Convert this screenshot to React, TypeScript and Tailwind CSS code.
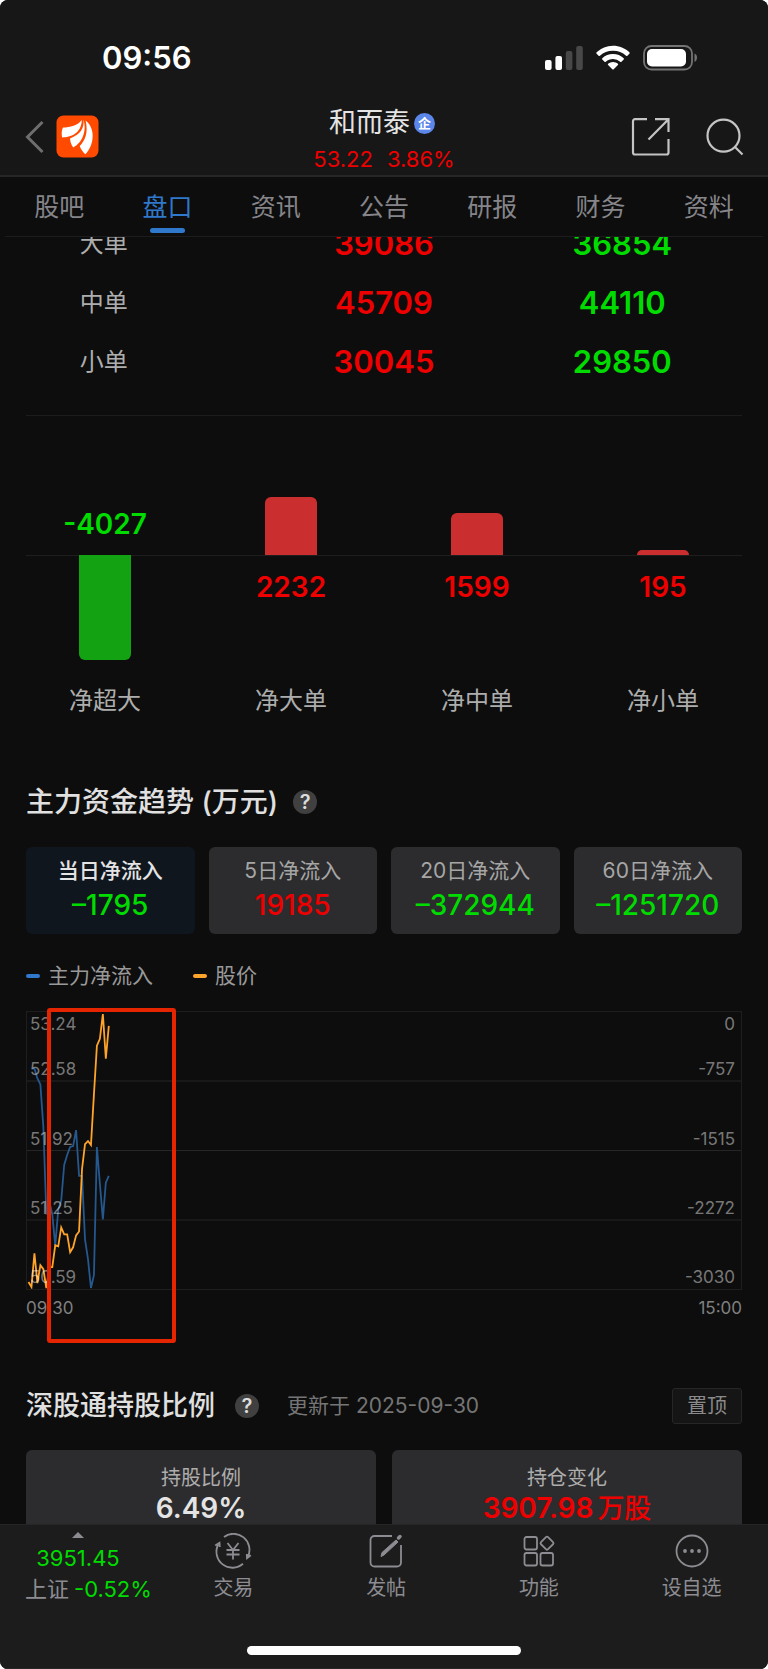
import { clsx } from "clsx";

const tabs = ["股吧", "盘口", "资讯", "公告", "研报", "财务", "资料"];

const orders = [
  { name: "大单", buy: 39086, sell: 36854 },
  { name: "中单", buy: 45709, sell: 44110 },
  { name: "小单", buy: 30045, sell: 29850 },
];

const netFlows = [
  { name: "净超大", value: -4027 },
  { name: "净大单", value: 2232 },
  { name: "净中单", value: 1599 },
  { name: "净小单", value: 195 },
];

const periods = [
  { name: "当日净流入", value: "–1795", up: false },
  { name: "5日净流入", value: "19185", up: true },
  { name: "20日净流入", value: "–372944", up: false },
  { name: "60日净流入", value: "–1251720", up: false },
];

const priceTicks = ["53.24", "52.58", "51.92", "51.25", "50.59"];
const flowTicks = ["0", "-757", "-1515", "-2272", "-3030"];

// one sample per minute, as distance from the top of a 279 unit high plot
const priceLine = [
  272, 277, 243, 273, 255, 259, 278, 257, 257, 235, 236, 217, 224, 224,
  242, 237, 225, 221, 158, 133, 130, 134, 83, 34, 27, 2, 47, 14,
];
const flowLine = [
  57, 57, 67, 73, 116, 204, 190, 204, 235, 199, 190, 154, 144, 136,
  135, 119, 165, 165, 229, 249, 278, 265, 136, 173, 209, 172, 165,
];

const MINUTES = 240;

function toPoints(values: number[], start: number) {
  return values.map((y, i) => `${((i + start + 0.5) * 716) / MINUTES},${y}`).join(" ");
}

function StatusBar() {
  return (
    <div className="flex h-[89px] items-center justify-between pl-[102px] pr-[70px] pt-[26px]">
      <span className="text-[31px] font-semibold leading-10 text-white">09:56</span>
      <div className="flex items-center gap-[13px]">
        <svg width="38" height="26" viewBox="0 0 38 26" aria-hidden="true">
          <rect x="0" y="15" width="6.600" height="10" rx="2" fill="#fff" />
          <rect x="10.400" y="11" width="6.600" height="14" rx="2" fill="#fff" />
          <rect x="20.800" y="6" width="6.600" height="19" rx="2" fill="#484848" />
          <rect x="31.200" y="1" width="6.600" height="24" rx="2" fill="#484848" />
        </svg>
        <svg width="34" height="26" viewBox="0 0 34 26" fill="#fff" aria-hidden="true">
          <path d="M17 .8c6.300 0 12.100 2.400 16.400 6.500.4.4.4 1 0 1.400l-2 2.100c-.4.4-1 .4-1.300 0A19 19 0 0 0 17 5.700 19 19 0 0 0 3.900 10.800c-.4.4-1 .4-1.300 0l-2-2.100c-.4-.4-.4-1 0-1.400A23.700 23.700 0 0 1 17 .8z" />
          <path d="M17 9c4.100 0 7.900 1.600 10.700 4.200.4.4.4 1 0 1.400l-2.200 2.100c-.4.4-.9.4-1.300 0A10.500 10.500 0 0 0 17 13.900c-2.800 0-5.300 1-7.200 2.800-.4.4-.9.4-1.300 0l-2.200-2.100c-.4-.4-.4-1 0-1.400A15.600 15.600 0 0 1 17 9z" />
          <path d="M17 17c1.900 0 3.600.7 4.900 1.800.4.4.4 1 0 1.300l-4.200 4.200c-.4.4-1 .4-1.400 0l-4.200-4.200c-.4-.4-.4-1 0-1.300A7.500 7.500 0 0 1 17 17z" />
        </svg>
        <svg width="55" height="26" viewBox="0 0 55 26" aria-hidden="true">
          <rect x="1" y="1" width="48" height="23.500" rx="7.500" fill="none" stroke="#747474" strokeWidth="1.800" />
          <rect x="4" y="4" width="39" height="17.500" rx="5" fill="#fff" />
          <path d="M51.500 8.500c1.600.6 2.500 2.300 2.500 4.200s-.9 3.600-2.500 4.200z" fill="#747474" />
        </svg>
      </div>
    </div>
  );
}

function Header() {
  return (
    <header className="flex-none border-b-2 border-[#262626] bg-[#171717]">
      <StatusBar />
      <div className="flex h-[86px] items-start justify-between px-6">
        <div className="flex w-[150px] items-center gap-3 pt-[26px]">
          <button type="button" aria-label="返回">
            <svg width="20" height="34" viewBox="0 0 20 34" fill="none" stroke="#6e6e6e" strokeWidth="3">
              <path d="M18.500 2 3.500 17l15 15" />
            </svg>
          </button>
          <svg width="43" height="43" viewBox="0 0 43 43" aria-hidden="true">
            <rect x=".5" y=".5" width="42" height="42" rx="7" fill="#ff4a00" />
            <path d="M25.800 5C22 10.400 14 12.300 7 12.600c-1.300 2-1.700 6.300-.9 9.800C14.500 22.400 25.500 18.500 25.800 5z" fill="#fff" />
            <path d="M27.400 4.600C28.500 13 24.500 20 14 23.400c.2 3.200 1.300 6.300 3.300 9C24.800 29 31.500 17.500 27.400 4.600z" fill="#fff" />
            <path d="M29.600 5.400c3 12.800-.8 20.200-5.900 25.500 1 2.900 3 6 5.700 8.300C37.600 31 40.500 14 29.600 5.400z" fill="#fff" />
          </svg>
        </div>
        <div className="flex flex-col items-center pt-4">
          <div className="flex h-9 items-center gap-1 pr-1">
            <h1 className="text-[27px] text-[#e4e4e4]">和而泰</h1>
            <span className="flex size-[21px] items-center justify-center rounded-full bg-[#5b86ea] text-[13px] font-bold leading-none text-white">
              企
            </span>
          </div>
          <p className="flex h-9 items-center gap-[14px] text-[22px] text-[#ee0000]">
            <span>53.22</span>
            <span>3.86%</span>
          </p>
        </div>
        <div className="flex w-[150px] items-center justify-end gap-9 pt-7">
          <button type="button" aria-label="分享">
            <svg width="39" height="39" viewBox="0 0 39 39" fill="none" stroke="#c4c4c4" strokeWidth="2.200">
              <path d="M16 2.200H4A2 2 0 0 0 2 4.200V35.500A2 2 0 0 0 4 37.500H35.500A2 2 0 0 0 37.500 35.500V22" />
              <path d="M24 2.200H37.500V15M37.500 2.200 17.500 22.500" />
            </svg>
          </button>
          <button type="button" aria-label="搜索">
            <svg width="38" height="38" viewBox="0 0 38 38" fill="none" stroke="#c4c4c4" strokeWidth="2.200">
              <circle cx="17.500" cy="17.700" r="16" />
              <path d="m28.500 28.500 8 8" />
            </svg>
          </button>
        </div>
      </div>
    </header>
  );
}

function OrderTable() {
  return (
    <table className="-mt-[23px] w-full table-fixed text-center">
      <tbody>
        {orders.map((order) => (
          <tr key={order.name} className="h-[59px]">
            <th className="w-[27%] text-2xl font-normal text-[#adadad]">{order.name}</th>
            <td className="w-[46%] text-[31px] font-semibold leading-10 text-[#ee0000]">{order.buy}</td>
            <td className="pr-[84px] text-[31px] font-semibold leading-10 text-[#00dc00]">{order.sell}</td>
          </tr>
        ))}
      </tbody>
    </table>
  );
}

function NetFlowChart() {
  return (
    <div className="relative px-3">
      <div className="absolute inset-x-[26px] top-[139px] h-px bg-[#1e1e1e]" />
      <div className="relative flex">
        {netFlows.map(({ name, value }) => {
          const height = Math.round(Math.abs(value) / 38.4);
          return (
            <div key={name} className="flex flex-1 flex-col items-center">
              <div className="flex h-[139px] flex-col items-center justify-end">
                {value > 0 ? (
                  <div className="w-[52px] rounded-t-md bg-[#cb2e2e]" style={{ height }} />
                ) : (
                  <span className="pb-[13px] text-[28px] font-semibold leading-9 text-[#00dc00]">{value}</span>
                )}
              </div>
              <div className="flex h-[130px] flex-col items-center">
                {value > 0 ? (
                  <span className="pt-[14px] text-[28px] font-semibold leading-9 text-[#ee0000]">{value}</span>
                ) : (
                  <div className="w-[52px] rounded-b-md bg-[#12a212]" style={{ height }} />
                )}
              </div>
              <span className="text-2xl text-[#adadad]">{name}</span>
            </div>
          );
        })}
      </div>
    </div>
  );
}

function HelpButton() {
  return (
    <button
      type="button"
      aria-label="说明"
      className="flex size-6 items-center justify-center rounded-full bg-[#404040] text-xl font-semibold leading-none text-[#dcdcdc]"
    >
      ?
    </button>
  );
}

function PeriodCards() {
  return (
    <div className="mt-[25px] grid grid-cols-4 gap-[14px]">
      {periods.map((period, index) => (
        <button
          type="button"
          key={period.name}
          className={clsx(
            "flex h-[87px] flex-col items-center rounded-md pt-2",
            index === 0 ? "bg-[#10161e]" : "bg-[#2c2c2e]"
          )}
        >
          <span className={clsx("text-[21px] leading-8", index === 0 ? "font-medium text-[#e4e4e4]" : "text-[#a6a6a6]")}>
            {period.name}
          </span>
          <span className={clsx("text-[28px] font-medium leading-9", period.up ? "text-[#ee0000]" : "text-[#00dc00]")}>
            {period.value}
          </span>
        </button>
      ))}
    </div>
  );
}

function TickLabels({ ticks, className }: { ticks: string[]; className: string }) {
  return (
    <div className={clsx("absolute inset-y-0 flex flex-col text-[17px] leading-6 text-white/45", className)}>
      <div className="h-0">{ticks[0]}</div>
      {ticks.slice(1).map((tick) => (
        <div key={tick} className="flex flex-1 items-end">
          {tick}
        </div>
      ))}
    </div>
  );
}

function TrendChart() {
  return (
    <div className="relative mt-[21px]">
      <div className="relative h-[279px] border border-[#1e1e1e]">
        <svg
          className="absolute inset-0 size-full"
          viewBox="0 0 716 279"
          preserveAspectRatio="none"
          fill="none"
          strokeWidth="1.800"
        >
          <path d="M0 69.500H716M0 139.500H716M0 209.500H716" stroke="#262626" strokeWidth="1" />
          <polyline points={toPoints(flowLine, 1)} stroke="#25588f" />
          <polyline points={toPoints(priceLine, 0)} stroke="#ffa42a" />
        </svg>
        <TickLabels ticks={priceTicks} className="left-[3px]" />
        <TickLabels ticks={flowTicks} className="right-[6px] items-end" />
      </div>
      <div className="mt-[6px] flex justify-between text-[17px] leading-6 text-[#808080]">
        <span>09:30</span>
        <span>15:00</span>
      </div>
      <div className="absolute -top-[3px] left-[21px] h-[335px] w-[129px] rounded-[3px] border-4 border-[#e52500]" />
    </div>
  );
}

const navItems = [
  {
    name: "交易",
    icon: (
      <>
        <path d="M10 3.900A16 16 0 0 1 34 23.500M36.800 22.300 33 25.200 32.800 21" />
        <path d="M29 30.800A16 16 0 0 1 4.200 11.500M1.200 12.500 5.500 9.800 5.800 14" />
        <path d="m13.500 10 5.500 7 5.500-7M12.500 17h13M12.500 21.500h13M19 17v9.500" />
      </>
    ),
  },
  {
    name: "发帖",
    icon: (
      <>
        <path d="M25 3H7.500A4 4 0 0 0 3.500 7V29.500A4 4 0 0 0 7.500 33.500H30A4 4 0 0 0 34 29.500V12" />
        <path d="m14 23.500 1-4L29 7l2 2L17 22z" fill="currentColor" strokeWidth="1" />
        <path d="m31.500 5 1.500-1.500" strokeWidth="3.500" strokeLinecap="round" />
      </>
    ),
  },
  {
    name: "功能",
    icon: (
      <>
        <rect x="4.500" y="4" width="12.500" height="12.500" rx="2" />
        <rect x="4.500" y="20" width="12.500" height="12.500" rx="2" />
        <rect x="20.500" y="20" width="12.500" height="12.500" rx="2" />
        <rect x="22" y="5.200" width="10" height="10" rx="1.500" transform="rotate(45 27 10.200)" />
      </>
    ),
  },
  {
    name: "设自选",
    icon: (
      <>
        <circle cx="19" cy="18" r="15.500" />
        <g fill="currentColor" stroke="none">
          <circle cx="12" cy="18" r="1.900" />
          <circle cx="19" cy="18" r="1.900" />
          <circle cx="26" cy="18" r="1.900" />
        </g>
      </>
    ),
  },
];

function BottomBar() {
  return (
    <footer className="flex h-[145px] flex-none flex-col items-center justify-between border-y border-[#262626] bg-[#1c1c1c] pb-[13px]">
      <nav className="flex w-full pt-[7px] text-[#8c8c92]">
        <div className="w-[157px] flex-none pl-[25px]">
          <div className="flex w-[106px] flex-col items-center">
            <svg width="12" height="6" viewBox="0 0 12 6" fill="currentColor" aria-hidden="true">
              <path d="M0 6 6 0l6 6z" />
            </svg>
            <span className="mt-1 text-[22px] leading-8 text-[#00dc00]">3951.45</span>
          </div>
          <p className="flex gap-[5px] text-[22px] leading-[30px]">
            <span>上证</span>
            <span className="text-[#00dc00]">-0.52%</span>
          </p>
        </div>
        {navItems.map((item) => (
          <button type="button" key={item.name} className="flex flex-1 flex-col items-center pt-px">
            <svg width="38" height="37" viewBox="0 0 38 37" fill="none" stroke="currentColor" strokeWidth="1.800">
              {item.icon}
            </svg>
            <span className="mt-1 text-xl">{item.name}</span>
          </button>
        ))}
      </nav>
      <div className="h-[9px] w-[274px] rounded-full bg-white" />
    </footer>
  );
}

export default function App() {
  return (
    <div className="h-screen bg-white">
      <div className="flex h-full flex-col overflow-hidden rounded-lg bg-[#0d0d0d] font-['Inter','Noto_Sans_CJK_SC',sans-serif]">
        <Header />
        <nav className="flex h-[59px] flex-none px-[5px]">
          {tabs.map((tab) => (
            <a
              key={tab}
              href="#"
              className={clsx(
                "flex flex-1 flex-col items-center pt-3 text-[25px] leading-9",
                tab === "盘口" ? "text-[#2f78cc]" : "text-[#85858a]"
              )}
            >
              {tab}
              {tab === "盘口" && <span className="mt-[3px] h-[5px] w-[35px] rounded-full bg-[#2f78cc]" />}
            </a>
          ))}
        </nav>
        <div className="mx-[5px] h-px flex-none bg-[#1c1c1c]" />

        <main className="min-h-0 flex-1 overflow-hidden">
          <OrderTable />
          <div className="mx-[26px] mt-6 h-px bg-[#1c1c1c]" />
          <NetFlowChart />

          <section className="mt-[65px] px-[26px]">
            <div className="flex h-10 items-center gap-[15px]">
              <h2 className="text-[28px] font-medium text-[#e0e0e0]">主力资金趋势 (万元)</h2>
              <HelpButton />
            </div>
            <PeriodCards />
            <div className="mt-7 flex h-7 gap-10 text-[21px] leading-7 text-[#999]">
              <span className="flex items-center gap-2">
                <i className="h-1 w-[14px] rounded-full bg-[#2f78cc]" />
                主力净流入
              </span>
              <span className="flex items-center gap-2">
                <i className="h-1 w-[14px] rounded-full bg-[#ffa42a]" />
                股价
              </span>
            </div>
            <TrendChart />
          </section>

          <section className="mt-[66px] px-[26px]">
            <div className="flex h-10 items-center">
              <h2 className="mr-5 text-[27px] font-medium text-[#e0e0e0]">深股通持股比例</h2>
              <HelpButton />
              <span className="ml-7 flex-1 text-[21px] text-[#757575]">更新于 2025-09-30</span>
              <button
                type="button"
                className="h-9 w-[70px] rounded-[3px] border border-[#262626] bg-[#151515] text-[20px] leading-none text-[#8a8a8a]"
              >
                置顶
              </button>
            </div>
            <div className="mt-6 grid grid-cols-2 gap-4 text-center">
              <div className="h-[120px] rounded-t-md bg-[#2c2c2e] pt-3">
                <p className="text-[20px] leading-8 text-[#adadad]">持股比例</p>
                <p className="text-[28px] font-semibold leading-7 text-[#e4e4e4]">6.49%</p>
              </div>
              <div className="h-[120px] rounded-t-md bg-[#2c2c2e] pt-3">
                <p className="text-[20px] leading-8 text-[#adadad]">持仓变化</p>
                <p className="text-[28px] font-semibold leading-7 text-[#ee0000]">
                  3907.98<span className="ml-1 text-[27px] font-medium">万股</span>
                </p>
              </div>
            </div>
          </section>
        </main>
        <BottomBar />
      </div>
    </div>
  );
}
